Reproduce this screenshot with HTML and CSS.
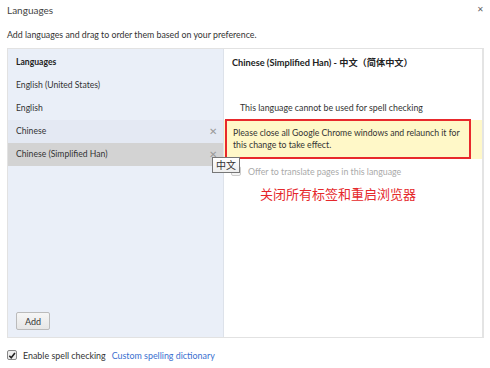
FILE: index.html
```html
<!DOCTYPE html>
<html>
<head>
<meta charset="utf-8">
<link rel="stylesheet" href="styles.css">
</head>
<body>
<div class="dialog">
  <div class="titlebar">
    <h1 class="title">Languages</h1>
    <span class="close">✕</span>
  </div>
  <p class="desc">Add languages and drag to order them based on your preference.</p>
  <div class="box">
    <div class="left">
      <div class="row head">Languages</div>
      <div class="row">English (United States)</div>
      <div class="row">English</div>
      <div class="row hover">Chinese<span class="x">✕</span></div>
      <div class="row selected">Chinese (Simplified Han)<span class="x">✕</span></div>
      <div class="spacer"></div>
      <div class="addwrap"><button class="add">Add</button></div>
    </div>
    <div class="right">
      <div class="rhead">Chinese (Simplified Han) - 中文（简体中文）</div>
      <div class="spell">This language cannot be used for spell checking</div>
      <div class="banner"><div class="notice">Please close all Google Chrome windows and relaunch it for this change to take effect.</div></div>
      <div class="offer"><span class="cb disabled"></span>Offer to translate pages in this language</div>
      <div class="annot">关闭所有标签和重启浏览器</div>
    </div>
    <div class="tooltip">中文</div>
  </div>
  <div class="footer">
    <span class="cb checked"><svg width="9" height="9" viewBox="0 0 9 9"><path d="M1.5 4.8 L3.6 7 L7.8 1.6" fill="none" stroke="#222" stroke-width="1.8"/></svg></span>
    <span class="label">Enable spell checking</span>
    <a class="link">Custom spelling dictionary</a>
  </div>
</div>
</body>
</html>
```
FILE: styles.css
```css
* { box-sizing: border-box; }
html, body { margin: 0; padding: 0; background: #fff; }
body {
  font-family: "Lato", "Noto Sans CJK SC", sans-serif;
  font-size: 8.8px;
  color: #333;
  width: 490px;
  height: 368px;
  overflow: hidden;
}
.dialog { padding: 0 6px 0 7px; }
.titlebar {
  display: flex;
  justify-content: space-between;
  align-items: flex-start;
  height: 25px;
}
.title {
  margin: 4px 0 0 0;
  font-size: 10px;
  font-weight: normal;
  color: #444;
}
.close { font-size: 8px; color: #666; margin-top: 4px; margin-right: 0; }
.desc { margin: 0; height: 23px; line-height: 20px; color: #333; font-size: 8.8px; }
.box {
  position: relative;
  display: flex;
  height: 290px;
  border: 1px solid #e2e2e2;
  border-right: 2px solid #e4e4e4;
}
.left {
  width: 216px;
  background: #eaeff8;
  border-right: 1px solid #dde2ea;
  display: flex;
  flex-direction: column;
  padding-top: 2px;
}
.row {
  height: 23px;
  line-height: 23px;
  padding-left: 8px;
  padding-right: 6px;
  display: flex;
  justify-content: space-between;
  color: #333;
  font-size: 8.6px;
}
.row.head { font-weight: bold; color: #222; }
.row.hover { background: #e4e9f3; }
.row.selected { background: #d3d3d3; }
.x { color: #999; font-size: 10px; }
.spacer { flex: 1; }
.addwrap { padding: 0 0 7px 8px; }
.add {
  font-family: inherit;
  font-size: 9px;
  color: #333;
  width: 34px;
  height: 18px;
  padding: 0;
  border: 1px solid #bbb;
  border-radius: 2px;
  background: linear-gradient(#f6f6f6, #e6e6e6);
}
.right { flex: 1; display: flex; flex-direction: column; padding-top: 2px; }
.rhead { height: 23px; line-height: 23px; padding-left: 8px; font-weight: bold; color: #222; font-size: 9.2px; }
.spell { margin-top: 27px; padding-left: 16px; line-height: 14px; height: 15px; }
.banner { margin-top: 4px; background: #fff8c8; height: 39px; }
.notice {
  width: 246px;
  height: 40px;
  margin-top: -1px;
  margin-left: 1px;
  border: 2px solid #e8292c;
  padding: 6px 6px;
  line-height: 12px;
  color: #333;
  font-size: 8.7px;
}
.offer { display: flex; align-items: center; height: 14px; margin-top: 5px; padding-left: 7px; color: #aaa; }
.cb {
  display: inline-block;
  width: 10px; height: 10px;
  border: 1px solid #ccc;
  border-radius: 2px;
  background: #f4f4f4;
  margin-right: 7px;
}
.annot {
  margin-top: 8px;
  padding-left: 36px;
  color: #e5282b;
  font-size: 13px;
  font-family: "Noto Sans CJK SC", sans-serif;
  line-height: 16px;
}
.tooltip {
  position: absolute;
  left: 204px;
  top: 108px;
  font-family: "Noto Sans CJK SC", sans-serif;
  font-size: 10px;
  line-height: 12px;
  padding: 1px 3px;
  border: 1px solid #777;
  background: linear-gradient(#fff, #eee);
  color: #333;
}
.footer { display: flex; align-items: center; margin-top: 11px; height: 12px; font-size: 8.9px; }
.cb.checked { border-color: #888; background: #eee; display: flex; align-items: center; justify-content: center; margin-right: 6px; }
.label { color: #333; margin-right: 6px; }
.link { color: #3a6fd0; }
```
